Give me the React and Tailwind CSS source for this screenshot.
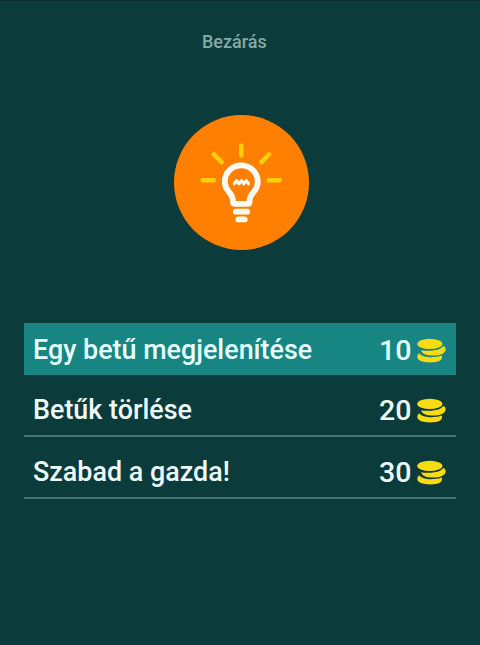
// Hints shown in the dialog, with their price in coins.
const HINTS = [
  { id: "reveal", label: "Egy betű megjelenítése", price: 10, selected: true },
  { id: "remove", label: "Betűk törlése", price: 20, selected: false },
  { id: "solve", label: "Szabad a gazda!", price: 30, selected: false },
];

// Stack of three coins.
function CoinsIcon() {
  return (
    <svg viewBox="0 0 30 25" className="mt-px h-[25px] w-[30px]" fill="#f8dc10">
      <ellipse cx="13.8" cy="5.9" rx="12.6" ry="5.2" />
      <path d="M5.2 12.2C9 13.2 19.5 13.1 24 10.7Q26.6 9.3 27.2 8Q29.7 8.4 29.7 11.2C29.7 15.2 24 17.6 17.2 17.6C10.6 17.6 5.6 15.8 5.2 12.2Z" />
      <path d="M3.2 15.2C5.2 18.4 12 19.5 18 19.1Q23.4 18.7 25.9 17.5Q27.6 24.4 13.8 24.4C6.4 24.4 1.3 22.4 1.3 18.8Q1.3 16.4 3.2 15.2Z" />
    </svg>
  );
}

function BulbBadge() {
  return (
    <div className="size-[135px] rounded-full bg-[#ff8000]">
      <svg viewBox="0 -0.5 135 135" className="size-full" fill="none" strokeLinecap="round" strokeLinejoin="round">
        <g stroke="#ffd008" strokeWidth="4.4">
          <path d="M67.3 29.9v10.2M39.8 38.8l7.8 7.8M95.2 38.8l-7.8 7.8M28.6 64.8h11.2M94.6 64.8h11.2" />
        </g>
        <g stroke="#fffaf4">
          <path
            strokeWidth="5.8"
            d="M60.8 88.4h13q1.6 0 1.6-1.5c0-5.5 1.7-7.6 4.2-10.4c2.6-2.9 4.2-6 4.2-10.1c0-9.5-7.3-16.5-16.5-16.5s-16.5 7-16.5 16.5c0 4.1 1.6 7.2 4.2 10.1c2.5 2.8 4.2 4.9 4.2 10.4q0 1.5 1.6 1.5z"
          />
          <path strokeWidth="3.1" d="M60.2 68.3l2.4-3.2l2.4 3.2l2.4-3.2l2.4 3.2l2.4-3.2l2.4 3.2" />
          <path strokeWidth="5.8" d="M61.8 96.2h11.4M64.3 103.9h6.4" />
        </g>
      </svg>
    </div>
  );
}

function HintRow({ hint }) {
  return (
    <button
      className={
        hint.selected
          ? "flex h-[52px] w-full items-center bg-[#178581] pr-2.5 pl-[9px] pt-0.5 text-[#e6ffff]"
          : "flex h-[62px] w-full items-center border-b-2 border-[#45756f] pr-2.5 pl-[9px] pt-2.5 text-[#eefafa]"
      }
    >
      <span className="flex-1 text-left text-[26.9px] leading-8">{hint.label}</span>
      <span className="mt-0.5 mr-1 text-[28.5px] leading-8">{hint.price}</span>
      <CoinsIcon />
    </button>
  );
}

export default function App() {
  return (
    <main className="flex h-[645px] w-[480px] flex-col border-t border-[#062c2c] bg-[#0b3b3a] pl-6 font-['Roboto',sans-serif] font-medium">
      <button className="mt-[29px] ml-[178px] h-6 self-start text-[18px] leading-6 text-[#85aaa5]">Bezárás</button>
      <div className="mt-[61px] ml-[150px]">
        <BulbBadge />
      </div>
      <div className="mt-[73px] w-[431.5px]">
        {HINTS.map((hint) => (
          <HintRow key={hint.id} hint={hint} />
        ))}
      </div>
    </main>
  );
}
